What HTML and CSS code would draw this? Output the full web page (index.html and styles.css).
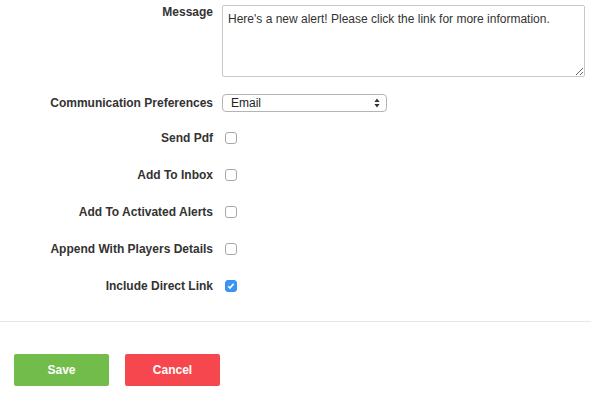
FILE: index.html
```html
<!DOCTYPE html>
<html lang="en">
<head>
    <meta charset="UTF-8">
    <meta name="viewport" content="width=device-width, initial-scale=1.0">
    <title>Edit Alert</title>
    <link rel="stylesheet" href="styles.css">
</head>
<body>
    <form class="alert-form">
        <div class="fields">
            <div class="row row-top">
                <label class="field-label" for="message">Message</label>
                <textarea id="message" class="message-input">Here's a new alert! Please click the link for more information.</textarea>
            </div>
            <div class="row">
                <label class="field-label" for="pref">Communication Preferences</label>
                <select id="pref" class="pref-select">
                    <option>Email</option>
                    <option>SMS</option>
                </select>
            </div>
            <div class="row row-first-check">
                <label class="field-label" for="sendPdf">Send Pdf</label>
                <input type="checkbox" id="sendPdf" class="check">
            </div>
            <div class="row">
                <label class="field-label" for="addInbox">Add To Inbox</label>
                <input type="checkbox" id="addInbox" class="check">
            </div>
            <div class="row">
                <label class="field-label" for="addActivated">Add To Activated Alerts</label>
                <input type="checkbox" id="addActivated" class="check">
            </div>
            <div class="row">
                <label class="field-label" for="appendPlayers">Append With Players Details</label>
                <input type="checkbox" id="appendPlayers" class="check">
            </div>
            <div class="row">
                <label class="field-label" for="directLink">Include Direct Link</label>
                <input type="checkbox" id="directLink" class="check" checked>
            </div>
        </div>

        <div class="actions">
            <button type="button" class="btn btn-save">Save</button>
            <button type="button" class="btn btn-cancel">Cancel</button>
        </div>
    </form>
</body>
</html>
```

FILE: styles.css
```css
body {
    margin: 0;
    font-family: "Liberation Sans", Arial, sans-serif;
    font-size: 12px;
    color: #333;
    background: #fff;
}
.fields {
    display: flex;
    flex-direction: column;
    gap: 19px;
    padding-top: 5px;
    padding-bottom: 26px;
    border-bottom: 1px solid #e8e8e8;
}
.row {
    display: flex;
    align-items: center;
    height: 18px;
}
.row-top {
    align-items: flex-start;
    height: auto;
    margin-bottom: -2px;
}
.row-first-check {
    margin-top: -2px;
}
.field-label {
    width: 213px;
    margin-right: 9px;
    text-align: right;
    font-weight: bold;
    line-height: 18px;
}
.row-top .field-label {
    margin-top: -2px;
}
.message-input {
    box-sizing: border-box;
    width: 363px;
    height: 72px;
    margin: 0;
    padding: 5px;
    border: 1px solid #c8c8c8;
    border-radius: 2px;
    font-family: "Liberation Sans", Arial, sans-serif;
    font-size: 12px;
    line-height: 16px;
    color: #333;
}
.pref-select {
    -webkit-appearance: none;
    appearance: none;
    box-sizing: border-box;
    width: 165px;
    height: 18px;
    margin: 0;
    padding: 0 20px 0 8px;
    border: 1px solid #b4b4b4;
    border-radius: 4px;
    background: #fff url("data:image/svg+xml,%3Csvg xmlns='http://www.w3.org/2000/svg' width='6' height='10'%3E%3Cpath d='M3 0.5L5.6 4H0.4z M3 9.5L5.6 6H0.4z' fill='%23333'/%3E%3C/svg%3E") no-repeat right 6px center;
    font-family: "Liberation Sans", Arial, sans-serif;
    font-size: 12px;
    color: #222;
}
.check {
    -webkit-appearance: none;
    appearance: none;
    box-sizing: border-box;
    width: 12px;
    height: 12px;
    margin: 0 0 0 3px;
    border: 1px solid #a8a8a8;
    border-radius: 3px;
    background: #fff;
}
.check:checked {
    border-color: #3a8ef0;
    background: #3a95f5 url("data:image/svg+xml,%3Csvg xmlns='http://www.w3.org/2000/svg' width='12' height='12'%3E%3Cpath d='M3.2 6.3L5 8.1L8.6 3.8' stroke='%23fff' stroke-width='1.6' fill='none'/%3E%3C/svg%3E") no-repeat center;
}
.actions {
    display: flex;
    gap: 16px;
    padding: 32px 14px 0;
}
.btn {
    width: 95px;
    height: 32px;
    border: none;
    border-radius: 2px;
    font-family: "Liberation Sans", Arial, sans-serif;
    font-size: 12px;
    font-weight: bold;
    color: #fff;
    cursor: pointer;
}
.btn-save {
    background-color: #72bc4b;
}
.btn-cancel {
    background-color: #f5474d;
}
```
